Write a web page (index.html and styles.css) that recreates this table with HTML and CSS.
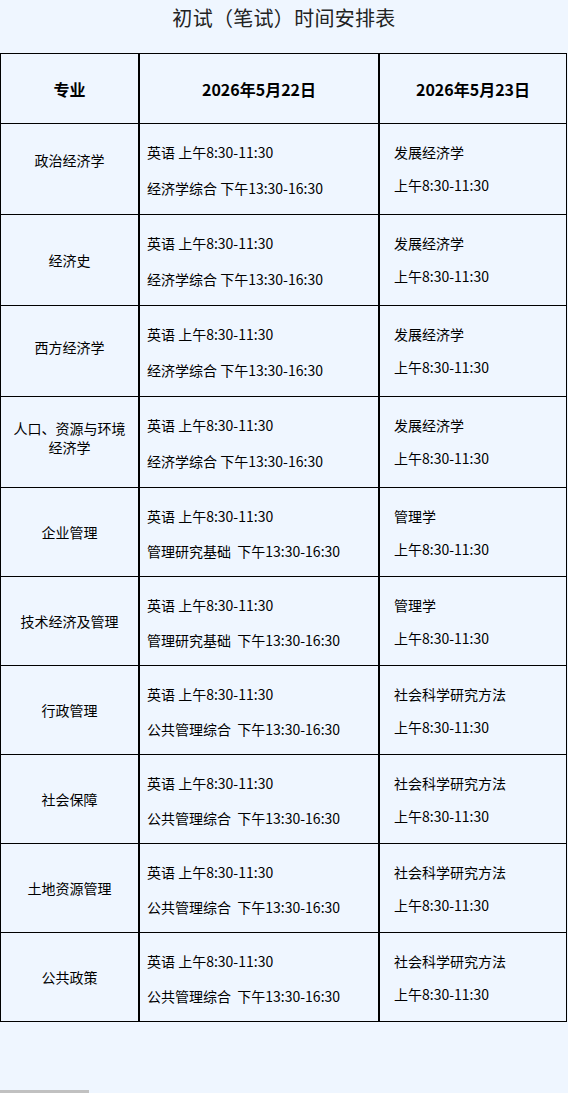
FILE: index.html
```html
<!DOCTYPE html>
<html lang="zh-CN">
<head>
<meta charset="utf-8">
<title>初试（笔试）时间安排表</title>
<link rel="stylesheet" href="styles.css">
</head>
<body>
<h1 class="title">初试（笔试）时间安排表</h1>
<div class="schedule">
  <div class="cell head c1">专业</div>
  <div class="cell head c2">2026年5月22日</div>
  <div class="cell head c3">2026年5月23日</div>

  <div class="cell major c1 lift-lg">政治经济学</div>
  <div class="cell day1 c2"><p>英语 上午8:30-11:30</p><p>经济学综合 下午13:30-16:30</p></div>
  <div class="cell day2 c3"><p>发展经济学</p><p>上午8:30-11:30</p></div>

  <div class="cell major c1">经济史</div>
  <div class="cell day1 c2"><p>英语 上午8:30-11:30</p><p>经济学综合 下午13:30-16:30</p></div>
  <div class="cell day2 c3"><p>发展经济学</p><p>上午8:30-11:30</p></div>

  <div class="cell major c1 lift-sm">西方经济学</div>
  <div class="cell day1 c2"><p>英语 上午8:30-11:30</p><p>经济学综合 下午13:30-16:30</p></div>
  <div class="cell day2 c3"><p>发展经济学</p><p>上午8:30-11:30</p></div>

  <div class="cell major c1 lift-sm">人口、资源与环境经济学</div>
  <div class="cell day1 c2"><p>英语 上午8:30-11:30</p><p>经济学综合 下午13:30-16:30</p></div>
  <div class="cell day2 c3"><p>发展经济学</p><p>上午8:30-11:30</p></div>

  <div class="cell major c1">企业管理</div>
  <div class="cell day1 tight c2"><p>英语 上午8:30-11:30</p><p>管理研究基础&nbsp; 下午13:30-16:30</p></div>
  <div class="cell day2 tight c3"><p>管理学</p><p>上午8:30-11:30</p></div>

  <div class="cell major c1">技术经济及管理</div>
  <div class="cell day1 tight c2"><p>英语 上午8:30-11:30</p><p>管理研究基础&nbsp; 下午13:30-16:30</p></div>
  <div class="cell day2 tight c3"><p>管理学</p><p>上午8:30-11:30</p></div>

  <div class="cell major c1">行政管理</div>
  <div class="cell day1 tight c2"><p>英语 上午8:30-11:30</p><p>公共管理综合&nbsp; 下午13:30-16:30</p></div>
  <div class="cell day2 tight c3"><p>社会科学研究方法</p><p>上午8:30-11:30</p></div>

  <div class="cell major c1">社会保障</div>
  <div class="cell day1 tight c2"><p>英语 上午8:30-11:30</p><p>公共管理综合&nbsp; 下午13:30-16:30</p></div>
  <div class="cell day2 tight c3"><p>社会科学研究方法</p><p>上午8:30-11:30</p></div>

  <div class="cell major c1">土地资源管理</div>
  <div class="cell day1 tight c2"><p>英语 上午8:30-11:30</p><p>公共管理综合&nbsp; 下午13:30-16:30</p></div>
  <div class="cell day2 tight c3"><p>社会科学研究方法</p><p>上午8:30-11:30</p></div>

  <div class="cell major c1">公共政策</div>
  <div class="cell day1 tight c2"><p>英语 上午8:30-11:30</p><p>公共管理综合&nbsp; 下午13:30-16:30</p></div>
  <div class="cell day2 tight c3"><p>社会科学研究方法</p><p>上午8:30-11:30</p></div>
</div>
<div class="scroll-thumb"></div>
</body>
</html>
```

FILE: styles.css
```css
html {
  background: #eff6ff;
}
body {
  margin: 0;
  min-height: 1093px;
  background: #eff6ff;
  font-family: "Noto Sans CJK SC", "Noto Sans", sans-serif;
  font-size: 14px;
  color: #000;
}
.title {
  margin: 0;
  height: 53px;
  line-height: 36px;
  font-size: 20px;
  font-weight: normal;
  color: #222;
  text-align: center;
  letter-spacing: 0.3px;
}
.schedule {
  display: grid;
  grid-template-columns: 140px 240px 187px;
  grid-template-rows: 71px repeat(4, 91px) repeat(6, 89px);
  width: 567px;
}
.cell {
  box-sizing: border-box;
  border-bottom: 1px solid #000;
}
.c1 {
  border-left: 1px solid #000;
  border-right: 2px solid #000;
}
.c2 {
  border-right: 2px solid #000;
}
.c3 {
  border-right: 1px solid #000;
}
.head {
  border-top: 1px solid #000;
  display: flex;
  align-items: center;
  justify-content: center;
  font-size: 16px;
  font-weight: bold;
}
.major {
  display: flex;
  align-items: center;
  justify-content: center;
  text-align: center;
  padding: 0 8px;
  line-height: 19px;
}
.major.lift-lg {
  padding-bottom: 17px;
}
.major.lift-sm {
  padding-bottom: 8px;
}
.day1,
.day2 {
  display: flex;
  flex-direction: column;
  padding-top: 18px;
  line-height: 20px;
  white-space: nowrap;
}
.day1 p,
.day2 p {
  margin: 0;
}
.day1 {
  padding-left: 7px;
  gap: 16px;
}
.day1.tight {
  gap: 15px;
}
.day2 {
  padding-left: 14px;
  padding-top: 18px;
  gap: 13px;
}
.scroll-thumb {
  position: fixed;
  left: 0;
  bottom: 0;
  width: 89px;
  height: 3px;
  background: #c1c1c1;
}
```
